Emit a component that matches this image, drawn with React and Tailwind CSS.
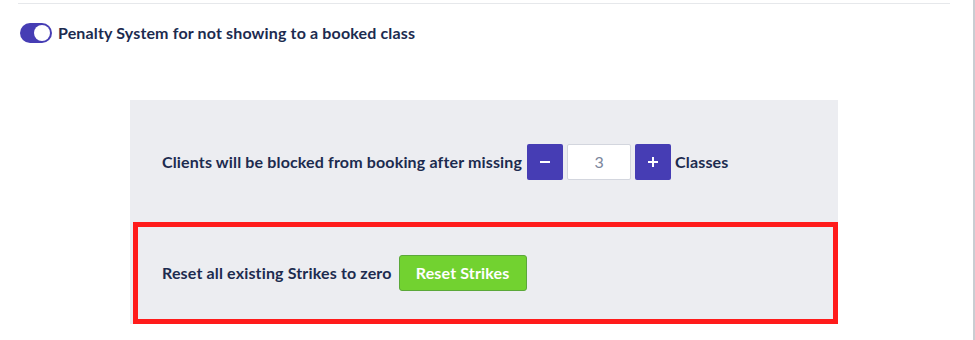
import React, { useState } from "react";

const PenaltySettings = () => {
  const [enabled, setEnabled] = useState(true);
  const [count, setCount] = useState(3);

  return (
    <div className="h-[340px] w-full bg-white border-r-2 border-[#c9cdd2] font-['Lato',sans-serif] text-[#1c2b4f] overflow-hidden">
      <div className="ml-[18px] mr-[23px] pt-[3px]">
        <div className="border-t border-[#e6e8eb]" />
      </div>

      <div className="flex h-[20px] items-center gap-[6px] pl-[20px] mt-[19px]">
        <button
          onClick={() => setEnabled(!enabled)}
          className="flex h-[20px] w-[32px] items-center rounded-full bg-[#463db4] px-[2px]"
        >
          <span
            className={
              enabled
                ? "ml-auto h-[16px] w-[16px] rounded-full bg-white"
                : "h-[16px] w-[16px] rounded-full bg-white"
            }
          />
        </button>
        <span className="text-[16px] font-bold tracking-[0.15px]">Penalty System for not showing to a booked class</span>
      </div>

      <div className="ml-[130px] mt-[57px] w-[708px] bg-[#ecedf1]">
        <div className="flex h-[122px] items-center pl-[32px] pt-[1px]">
          <span className="text-[16px] font-bold tracking-[0.15px]">Clients will be blocked from booking after missing</span>
          <button
            onClick={() => setCount(Math.max(0, count - 1))}
            className="ml-[5px] flex h-[36px] w-[36px] items-center justify-center rounded-[2px] bg-[#463db4] text-white"
          >
            <svg width="12" height="12" viewBox="0 0 12 12">
              <path d="M1 6h10" stroke="white" strokeWidth="2" />
            </svg>
          </button>
          <div className="ml-[4px] flex h-[36px] w-[64px] items-center justify-center rounded-[2px] border border-[#d3d6de] bg-white text-[16px] text-[#7b869c]">
            {count}
          </div>
          <button
            onClick={() => setCount(count + 1)}
            className="ml-[4px] flex h-[36px] w-[36px] items-center justify-center rounded-[2px] bg-[#463db4] text-white"
          >
            <svg width="12" height="12" viewBox="0 0 12 12">
              <path d="M1 6h10M6 1v10" stroke="white" strokeWidth="2" />
            </svg>
          </button>
          <span className="ml-[4px] text-[16px] font-bold tracking-[0.15px]">Classes</span>
        </div>

        <div className="ml-[3px] flex h-[102px] items-center border-[5px] border-[#ff1b1b] pl-[24px]">
          <span className="text-[16px] font-bold tracking-[0.15px]">Reset all existing Strikes to zero</span>
          <button className="ml-[7px] flex h-[36px] w-[128px] items-center justify-center rounded-[3px] border border-[#5ba83a] bg-[#72d230] text-[16px] font-bold tracking-[0.15px] text-white">
            Reset Strikes
          </button>
        </div>
      </div>
    </div>
  );
};

export default function App() {
  return <PenaltySettings />;
}
